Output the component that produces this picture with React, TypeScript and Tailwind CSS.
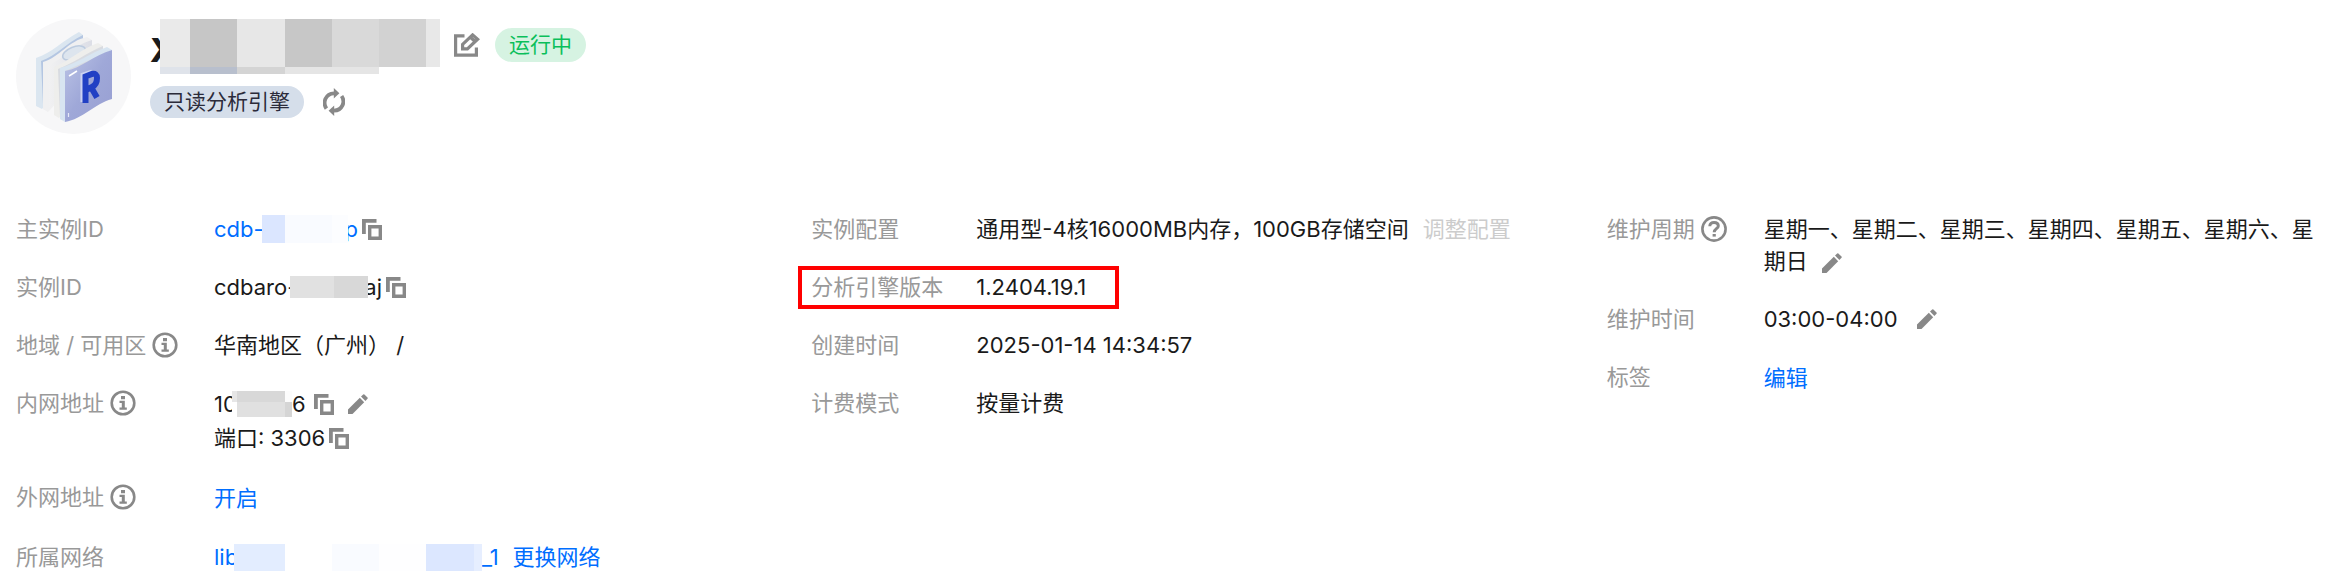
import React from 'react';

interface IconProps {
  className?: string;
}

interface Block {
  w: string;
  color: string;
}

const CopyIcon: React.FC<IconProps> = ({ className = '' }) => (
  <svg viewBox="0 0 20 21" className={`w-5 h-[21px] shrink-0 ${className}`} fill="none" stroke="#888" aria-hidden="true">
    <path d="M1.900 15V1.900H14.500" strokeWidth="3.800" />
    <path d="M7.700 7.700H18.300V19.300H7.700Z" strokeWidth="3.400" />
  </svg>
);

const PencilIcon: React.FC<IconProps> = ({ className = '' }) => (
  <svg viewBox="0 0 20 20" className={`w-5 h-5 shrink-0 ${className}`} fill="#888" aria-hidden="true">
    <path d="M0 20V15.5L11.8 3.8L16.2 8.2L4.5 20Z" />
    <path d="M13 2.6L15.2 0.5Q15.8 0 16.4 0.5L19.5 3.6Q20 4.2 19.5 4.8L17.4 7Z" />
  </svg>
);

const InfoIcon: React.FC<IconProps> = ({ className = '' }) => (
  <svg viewBox="0 0 26 26" className={`w-[26px] h-[26px] shrink-0 ${className}`} fill="#888" aria-hidden="true">
    <circle cx="13" cy="13" r="11.3" fill="none" stroke="#888" strokeWidth="2.6" />
    <path d="M11 6H15V9.2H11ZM9.5 10.8H14.8V17.6H16.8V19.8H9.5V17.6H11.8V13H9.5Z" />
  </svg>
);

const HelpIcon: React.FC<IconProps> = ({ className = '' }) => (
  <svg viewBox="0 0 26 26" className={`w-[26px] h-[26px] shrink-0 ${className}`} fill="none" stroke="#888" aria-hidden="true">
    <circle cx="13" cy="13" r="11.6" strokeWidth="2.6" />
    <path d="M8.8 10.3C8.8 7.6 10.6 6.4 13 6.4C15.6 6.4 17.3 7.8 17.3 9.9C17.3 12.6 13.2 12.8 13.2 16.2" strokeWidth="3" />
    <path d="M11.6 19.3H14.8" strokeWidth="2.6" />
  </svg>
);

const EditIcon: React.FC<IconProps> = ({ className = '' }) => (
  <svg viewBox="0 0 26 24" className={`w-[26px] h-6 shrink-0 ${className}`} fill="none" stroke="#888" aria-hidden="true">
    <path d="M10.5 2.8H1.6V22.2H22.4V14.5" strokeWidth="3.2" />
    <path d="M8.6 15.8V11.4L18.6 1.9L23.6 6.2L13.4 15.8Z" strokeWidth="3.2" />
    <path d="M16.2 4L21.4 8.8" strokeWidth="3.2" />
  </svg>
);

const RefreshIcon: React.FC<IconProps> = ({ className = '' }) => (
  <svg viewBox="0 0 22 28" className={`w-[22px] h-7 shrink-0 ${className}`} fill="none" stroke="#888" aria-hidden="true">
    <path d="M3.4 20.6C-0.6 14.6 2.4 5.6 11 5.3" strokeWidth="3.8" />
    <path d="M18.6 8C22.6 13.8 19.4 22.4 11 22.7" strokeWidth="3.8" />
    <path d="M10.8 0L16.4 5.2L10.8 10.6Z" fill="#888" stroke="none" />
    <path d="M11.2 17.4L5.6 22.8L11.2 28Z" fill="#888" stroke="none" />
  </svg>
);

const InstanceLogo: React.FC = () => (
  <svg viewBox="0 0 115 115" className="w-[115px] h-[115px] shrink-0" aria-hidden="true">
    <defs>
      <linearGradient id="front" x1="0" y1="0" x2="1" y2="1">
        <stop offset="0" stopColor="#bcc4e6" />
        <stop offset="0.5" stopColor="#9fa8d8" />
        <stop offset="1" stopColor="#989fd2" />
      </linearGradient>
      <linearGradient id="sheet" x1="0" y1="0" x2="1" y2="0">
        <stop offset="0" stopColor="#f1f1f2" />
        <stop offset="1" stopColor="#dcdee6" />
      </linearGradient>
    </defs>
    <circle cx="57.5" cy="57.5" r="57.5" fill="#f7f7f8" />
    <path d="M20 39C36 34 46 22 63 13L67 16V40L26 90L20 87Z" fill="#dbe6f0" />
    <path d="M25 42C40 37 50 24 67 16V36L27 85Z" fill="#b4c6e2" />
    <path d="M27 43C44 38 52 22 71 18L76 21V45L32 93L27 90Z" fill="#f0f0f1" />
    <path d="M32 46C48 40 56 27 76 21V45L33 90Z" fill="url(#sheet)" />
    <ellipse cx="58" cy="34" rx="12" ry="6" transform="rotate(-22 58 34)" fill="#dde5ee" stroke="#bccbdf" strokeWidth="1.5" />
    <path d="M38 48C54 42 64 30 82 24L87 27V45L43 99L38 96Z" fill="#eeeeec" />
    <path d="M42 50C58 44 70 34 87 27V45L44 97Z" fill="#d8dbe1" />
    <path d="M44 49C62 44 74 34 91 28L96 31L49 52V103L44 100Z" fill="#d8e5f1" />
    <path d="M49 52C66 49 78 36 96 31V80C78 85 67 100 49 103Z" fill="url(#front)" />
    <path d="M53 57L61 52" stroke="#fff" strokeWidth="1.5" />
    <path d="M52.5 94V98" stroke="#e6eaf8" strokeWidth="1.2" />
    <path d="M67 83V56L76 53" fill="none" stroke="#cbd2f2" strokeWidth="5" />
    <path d="M69.5 84V57.5L76 55Q81 54 81 59Q81 65.500 76 68L70 71M75.500 69L81 78.500" fill="none" stroke="#2140c4" strokeWidth="6" />
  </svg>
);

// Pixelated cover, painted over the private part of a value
const Mosaic: React.FC<{ blocks: Block[]; height: string }> = ({ blocks, height }) => (
  <span className={`relative z-10 flex shrink-0 ${height}`} aria-hidden="true">
    {blocks.map((b, i) => (
      <span key={i} className={`${b.w} ${b.color}`} />
    ))}
  </span>
);

const IconButton: React.FC<{ label: string; className?: string; children: React.ReactNode }> = ({
  label,
  className = '',
  children,
}) => (
  <button type="button" aria-label={label} className={`shrink-0 cursor-pointer ${className}`}>
    {children}
  </button>
);

interface FieldProps {
  label: string;
  labelWidth: string;
  icon?: React.ReactNode;
  children: React.ReactNode;
}

const Field: React.FC<FieldProps> = ({ label, labelWidth, icon, children }) => (
  <div className="flex items-start">
    <dt className={`flex items-center gap-1.5 shrink-0 whitespace-nowrap text-[#999] ${labelWidth}`}>
      {label}
      {icon}
    </dt>
    <dd className="flex-1 min-w-0">{children}</dd>
  </div>
);

const App: React.FC = () => {
  return (
    <main className="min-h-screen bg-white pl-4 pr-5 pt-[19px] font-[Inter,'Noto_Sans_CJK_SC',sans-serif] text-[22px] leading-8 text-[#1a1a1a]">
      <header className="flex items-start gap-[19px]">
        <InstanceLogo />
        <div>
          <div className="flex items-start">
            <h1 className="w-[10px] pt-3 text-[32px] leading-[40px] font-extrabold">X</h1>
            <div>
              <Mosaic
                height="h-12"
                blocks={[
                  { w: 'w-[30px]', color: 'bg-[#eaeaea]' },
                  { w: 'w-[47px]', color: 'bg-[#c6c6c6]' },
                  { w: 'w-[48px]', color: 'bg-[#e7e7e7]' },
                  { w: 'w-[47px]', color: 'bg-[#c7c7c7]' },
                  { w: 'w-[47px]', color: 'bg-[#d9d9d9]' },
                  { w: 'w-[47px]', color: 'bg-[#d2d2d2]' },
                  { w: 'w-[14px]', color: 'bg-[#e8e8e8]' },
                ]}
              />
              <Mosaic
                height="h-[7px]"
                blocks={[
                  { w: 'w-[30px]', color: 'bg-[#dfe3ea]' },
                  { w: 'w-[47px]', color: 'bg-[#b8bfcd]' },
                  { w: 'w-[48px]', color: 'bg-[#d4d4d4]' },
                  { w: 'w-[94px]', color: 'bg-[#e5e5e5]' },
                ]}
              />
            </div>
            <div className="ml-[14px] flex h-[52px] items-center gap-[15px]">
              <IconButton label="编辑名称">
                <EditIcon />
              </IconButton>
              <span className="rounded-full bg-[#d6f3e2] px-[14px] text-[21px] leading-[34px] text-[#0abf5b]">运行中</span>
            </div>
          </div>
          <div className="mt-3 flex items-center gap-[19px]">
            <span className="rounded-full bg-[#d5deea] px-[14px] text-[21px] text-[#2b2b3a]">只读分析引擎</span>
            <IconButton label="刷新">
              <RefreshIcon />
            </IconButton>
          </div>
        </div>
      </header>

      <div className="mt-[79px] grid grid-cols-3 gap-x-20">
        <dl className="flex flex-col gap-[26px]">
          <Field label="主实例ID" labelWidth="w-[198px]">
            <div className="flex items-center">
              <a href="#" className="flex items-center text-[#006eff]">
                <span className="w-12 whitespace-nowrap">cdb-</span>
                <Mosaic
                  height="h-7"
                  blocks={[
                    { w: 'w-[23px]', color: 'bg-[#dbe6ff]' },
                    { w: 'w-[47px]', color: 'bg-[#f9fbff]' },
                    { w: 'w-4', color: 'bg-[#fcfdff]' },
                  ]}
                />
                <span className="flex w-[10px] justify-end">p</span>
              </a>
              <IconButton label="复制主实例ID" className="ml-1">
                <CopyIcon />
              </IconButton>
            </div>
          </Field>
          <Field label="实例ID" labelWidth="w-[198px]">
            <div className="flex items-center">
              <span className="w-[76px] whitespace-nowrap">cdbaro-</span>
              <Mosaic
                height="h-[22px]"
                blocks={[
                  { w: 'w-11', color: 'bg-[#e1e1e1]' },
                  { w: 'w-[34px]', color: 'bg-[#d8d8d8]' },
                ]}
              />
              <span className="flex w-[14px] justify-end">aj</span>
              <IconButton label="复制实例ID" className="ml-1">
                <CopyIcon />
              </IconButton>
            </div>
          </Field>
          <Field label="地域 / 可用区" labelWidth="w-[198px]" icon={<InfoIcon />}>
            华南地区（广州） /
          </Field>
          <Field label="内网地址" labelWidth="w-[198px]" icon={<InfoIcon />}>
            <div className="flex items-center leading-[34px]">
              <span className="w-[18px] whitespace-nowrap">10</span>
              <span className="shrink-0">
                <Mosaic
                  height="h-[11px]"
                  blocks={[
                    { w: 'w-[5px]', color: 'bg-[#e6e6e6]' },
                    { w: 'w-12', color: 'bg-[#d8d8d8]' },
                    { w: 'w-[7px]', color: 'bg-[#fcfcfc]' },
                  ]}
                />
                <Mosaic
                  height="h-[15px]"
                  blocks={[
                    { w: 'w-[5px]', color: 'bg-white' },
                    { w: 'w-12', color: 'bg-[#e0e0e0]' },
                    { w: 'w-[7px]', color: 'bg-[#d5d5d5]' },
                  ]}
                />
              </span>
              6
              <IconButton label="复制内网地址" className="ml-2">
                <CopyIcon />
              </IconButton>
              <IconButton label="修改内网地址" className="ml-[14px]">
                <PencilIcon />
              </IconButton>
            </div>
            <div className="flex items-center leading-[34px]">
              端口: 3306
              <IconButton label="复制端口" className="ml-1">
                <CopyIcon />
              </IconButton>
            </div>
          </Field>
          <Field label="外网地址" labelWidth="w-[198px]" icon={<InfoIcon />}>
            <button type="button" className="block cursor-pointer leading-[34px] text-[#006eff]">
              开启
            </button>
          </Field>
          <Field label="所属网络" labelWidth="w-[198px]">
            <div className="flex items-center text-[#006eff]">
              <a href="#" className="flex items-center">
                <span className="w-5 whitespace-nowrap">lib</span>
                <Mosaic
                  height="h-[27px]"
                  blocks={[
                    { w: 'w-[51px]', color: 'bg-[#e3edff]' },
                    { w: 'w-[47px]', color: 'bg-white' },
                    { w: 'w-[47px]', color: 'bg-[#f9fbff]' },
                    { w: 'w-[47px]', color: 'bg-[#fefeff]' },
                    { w: 'w-12', color: 'bg-[#dce7ff]' },
                    { w: 'w-2', color: 'bg-[#e6eeff]' },
                  ]}
                />
                _1
              </a>
              <button type="button" className="ml-[14px] cursor-pointer">
                更换网络
              </button>
            </div>
          </Field>
        </dl>

        <dl className="flex flex-col gap-[26px]">
          <Field label="实例配置" labelWidth="w-[165px]">
            通用型-4核16000MB内存，100GB存储空间
            <button type="button" disabled className="ml-[14px] text-[#ccc]">
              调整配置
            </button>
          </Field>
          <div className="relative">
            <Field label="分析引擎版本" labelWidth="w-[165px]">
              1.2404.19.1
            </Field>
            <span className="pointer-events-none absolute -left-[13px] -top-[5px] h-[43px] w-[321px] border-4 border-[#ff0000]" />
          </div>
          <Field label="创建时间" labelWidth="w-[165px]">
            2025-01-14 14:34:57
          </Field>
          <Field label="计费模式" labelWidth="w-[165px]">
            按量计费
          </Field>
        </dl>

        <dl className="flex flex-col gap-[26px]">
          <Field label="维护周期" labelWidth="w-[157px]" icon={<HelpIcon />}>
            星期一、星期二、星期三、星期四、星期五、星期六、星期日
            <IconButton label="修改维护周期" className="ml-[14px] align-middle">
              <PencilIcon />
            </IconButton>
          </Field>
          <Field label="维护时间" labelWidth="w-[157px]">
            <div className="flex items-center">
              03:00-04:00
              <IconButton label="修改维护时间" className="ml-[19px]">
                <PencilIcon />
              </IconButton>
            </div>
          </Field>
          <Field label="标签" labelWidth="w-[157px]">
            <button type="button" className="block cursor-pointer leading-[34px] text-[#006eff]">
              编辑
            </button>
          </Field>
        </dl>
      </div>
    </main>
  );
};

export default App;
